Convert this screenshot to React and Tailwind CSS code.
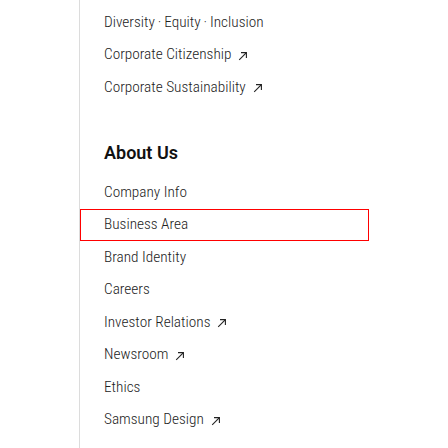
function Arrow() {
  return (
    <svg width="10" height="10" viewBox="0 0 10 10" className="ml-[7px] mt-[2px] shrink-0" fill="none" stroke="#222" strokeWidth="1.1">
      <path d="M1.2 8.8 L8.4 1.6" />
      <path d="M3 1.6 H8.4 V7" />
    </svg>
  );
}

function Item({ label, ext, focused }) {
  return (
    <div
      className={
        "h-[32.5px] flex items-center pl-6 text-[15.3px] font-light text-[#222] " +
        (focused ? "outline outline-1 outline-[#ff0000] -outline-offset-1" : "")
      }
    >
      <span>{label}</span>
      {ext && <Arrow />}
    </div>
  );
}

export default function App() {
  return (
    <div className="w-[448px] h-[448px] bg-white flex overflow-hidden" style={{ fontFamily: "'Roboto Condensed', 'Roboto', sans-serif" }}>
      <div className="w-[79px] shrink-0"></div>
      <div className="w-[290px] border-l border-[#dcdcdc] pt-[6px]">
        <Item label={"Diversity\u2009·\u2009Equity\u2009·\u2009Inclusion"} />
        <Item label="Corporate Citizenship" ext />
        <Item label="Corporate Sustainability" ext />
        <div
          className="pl-6 mt-[36.5px] mb-[12px] h-[24px] flex items-center text-[18px] font-semibold text-[#111]"
          style={{ fontFamily: "Roboto, sans-serif" }}
        >
          About Us
        </div>
        <Item label="Company Info" />
        <Item label="Business Area" focused />
        <Item label="Brand Identity" />
        <Item label="Careers" />
        <Item label="Investor Relations" ext />
        <Item label="Newsroom" ext />
        <Item label="Ethics" />
        <Item label="Samsung Design" ext />
      </div>
    </div>
  );
}
